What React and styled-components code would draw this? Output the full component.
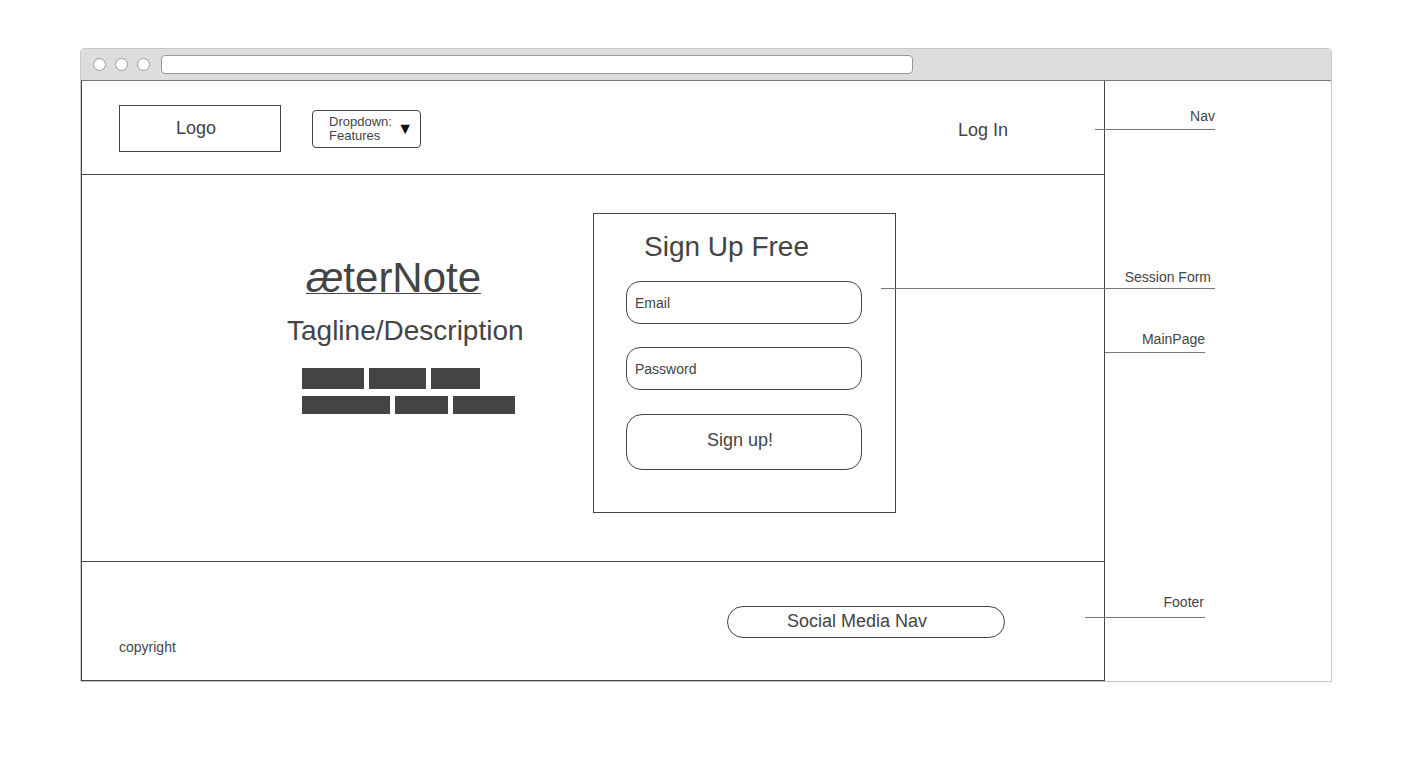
import React from "react"
import styled, { createGlobalStyle } from "styled-components"

const GlobalStyle = createGlobalStyle`
  body {
    margin: 0;
    background: #fff;
    font-family: "Liberation Sans", Arial, sans-serif;
    color: #444;
  }
`

const annotations = [
  { label: "Nav", line: 129, from: 1095, to: 1215, inset: 0, lift: 2 },
  { label: "Session Form", line: 288, from: 881, to: 1215, inset: 4, lift: 0 },
  { label: "MainPage", line: 352, from: 1105, to: 1205, inset: 0, lift: 2 },
  { label: "Footer", line: 617, from: 1085, to: 1205, inset: 1, lift: 4 },
]

const App = () => {
  return (
    <>
      <GlobalStyle />
      <Stage>
        <BrowserWindow>
          <TitleBar>
            <Dot />
            <Dot />
            <Dot />
            <UrlBar />
          </TitleBar>
          <WindowBody>
            <Page>
              <Nav>
                <LogoBox>Logo</LogoBox>
                <Dropdown>
                  <DropdownLabel>
                    Dropdown:
                    <br />
                    Features
                  </DropdownLabel>
                  <Caret>▼</Caret>
                </Dropdown>
                <LoginLink>Log In</LoginLink>
              </Nav>
              <Main>
                <Hero>
                  <Title $indent={19}>
                    <em>æ</em>terNote
                  </Title>
                  <Tagline>Tagline/Description</Tagline>
                  <BarRow $indent={15} $height={21}>
                    <Bar $w={62} />
                    <Bar $w={57} />
                    <Bar $w={49} />
                  </BarRow>
                  <BarRow $indent={15} $height={18} $gapTop={7}>
                    <Bar $w={88} />
                    <Bar $w={53} />
                    <Bar $w={62} />
                  </BarRow>
                </Hero>
                <SessionForm>
                  <FormTitle>Sign Up Free</FormTitle>
                  <Field>Email</Field>
                  <Field $gapTop={23}>Password</Field>
                  <SubmitButton>Sign up!</SubmitButton>
                </SessionForm>
              </Main>
              <Footer>
                <Copyright>copyright</Copyright>
                <SocialNav>Social Media Nav</SocialNav>
              </Footer>
            </Page>
          </WindowBody>
          {annotations.map((a) => (
            <Annotation
              key={a.label}
              $top={a.line - 68 - a.lift}
              $left={a.from - 81}
              $width={a.to - a.from}
              $inset={a.inset}
              $lift={a.lift}
            >
              {a.label}
            </Annotation>
          ))}
        </BrowserWindow>
      </Stage>
    </>
  )
}

const Stage = styled.div`
  padding: 48px 0 0 80px;
`

const BrowserWindow = styled.div`
  position: relative;
  width: 1250px;
  border: 1px solid #c8c8c8;
  border-radius: 4px 4px 0 0;
`

const TitleBar = styled.div`
  display: flex;
  align-items: center;
  gap: 9px;
  height: 31px;
  padding-left: 12px;
  background: #dddddd;
  border-bottom: 1px solid #777;
  border-radius: 4px 4px 0 0;
`

const Dot = styled.span`
  width: 11px;
  height: 11px;
  border-radius: 50%;
  background: #fff;
  border: 1px solid #999;
`

const UrlBar = styled.div`
  width: 750px;
  height: 17px;
  margin-left: 2px;
  background: #fff;
  border: 1px solid #999;
  border-radius: 4px;
`

const WindowBody = styled.div`
  display: flex;
  height: 600px;
`

const Page = styled.div`
  display: flex;
  flex-direction: column;
  width: 1022px;
  border: 1px solid #444;
  border-top: none;
`

const Nav = styled.div`
  display: flex;
  align-items: center;
  height: 93px;
  padding-left: 37px;
  border-bottom: 1px solid #444;
`

const LogoBox = styled.div`
  display: flex;
  align-items: center;
  justify-content: center;
  box-sizing: border-box;
  width: 162px;
  height: 47px;
  margin-top: 2px;
  padding-right: 8px;
  border: 1px solid #444;
  font-size: 18px;
`

const Dropdown = styled.div`
  display: flex;
  align-items: center;
  justify-content: space-between;
  box-sizing: border-box;
  width: 109px;
  height: 38px;
  margin: 2px 0 0 31px;
  padding: 0 7px 0 16px;
  border: 1px solid #444;
  border-radius: 4px;
`

const DropdownLabel = styled.div`
  font-size: 13px;
  line-height: 14px;
`

const Caret = styled.span`
  font-size: 16px;
  line-height: 16px;
  color: #111;
`

const LoginLink = styled.div`
  margin: 5px 96px 0 auto;
  font-size: 18px;
`

const Main = styled.div`
  display: flex;
  align-items: flex-start;
  height: 387px;
  padding: 38px 0 0 205px;
  box-sizing: border-box;
  border-bottom: 1px solid #444;
`

const Hero = styled.div`
  display: flex;
  flex-direction: column;
  align-items: flex-start;
  width: 236px;
  margin-top: 41px;
`

const Title = styled.h1`
  margin: 0 0 0 ${(p) => p.$indent}px;
  font-size: 42px;
  font-weight: 400;
  line-height: 48px;
  text-decoration: underline;
  text-decoration-thickness: 1px;
  text-underline-offset: 1px;

  em {
    font-style: italic;
  }
`

const Tagline = styled.div`
  margin-top: 13px;
  font-size: 28px;
  line-height: 32px;
  white-space: nowrap;
`

const BarRow = styled.div`
  display: flex;
  gap: 5px;
  height: ${(p) => p.$height}px;
  margin: ${(p) => p.$gapTop || 21}px 0 0 ${(p) => p.$indent}px;
`

const Bar = styled.span`
  width: ${(p) => p.$w}px;
  background: #444;
`

const SessionForm = styled.div`
  box-sizing: border-box;
  width: 303px;
  height: 300px;
  margin-left: 70px;
  padding: 17px 0 0 32px;
  border: 1px solid #444;
`

const FormTitle = styled.div`
  margin: 0 0 18px 18px;
  font-size: 28px;
  line-height: 32px;
`

const Field = styled.div`
  display: flex;
  align-items: center;
  box-sizing: border-box;
  width: 236px;
  height: 43px;
  margin-top: ${(p) => p.$gapTop || 0}px;
  padding-left: 8px;
  border: 1px solid #444;
  border-radius: 14px;
  font-size: 14px;
`

const SubmitButton = styled.div`
  display: flex;
  justify-content: center;
  box-sizing: border-box;
  width: 236px;
  height: 56px;
  margin-top: 24px;
  padding: 15px 8px 0 0;
  border: 1px solid #444;
  border-radius: 16px;
  font-size: 18px;
`

const Footer = styled.div`
  display: flex;
  align-items: center;
  flex: 1;
  padding-left: 37px;
`

const Copyright = styled.div`
  align-self: flex-end;
  margin-bottom: 25px;
  font-size: 14px;
`

const SocialNav = styled.div`
  display: flex;
  align-items: center;
  justify-content: center;
  box-sizing: border-box;
  width: 278px;
  height: 32px;
  margin: 1px 99px 0 auto;
  padding-right: 18px;
  border: 1px solid #444;
  border-radius: 16px;
  font-size: 18px;
`

const Annotation = styled.div`
  position: absolute;
  top: ${(p) => p.$top}px;
  left: ${(p) => p.$left}px;
  box-sizing: border-box;
  width: ${(p) => p.$width}px;
  height: ${(p) => 20 + p.$lift}px;
  padding-right: ${(p) => p.$inset}px;
  border-bottom: 1px solid #777;
  font-size: 14px;
  line-height: 16px;
  text-align: right;
`

export default App
